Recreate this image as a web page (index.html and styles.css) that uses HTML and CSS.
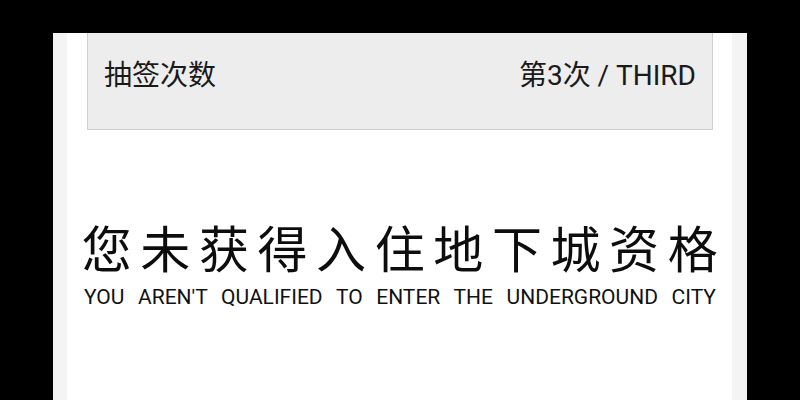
FILE: index.html
```html
<!DOCTYPE html>
<html lang="zh-CN">
<head>
<meta charset="utf-8">
<title>抽签结果</title>
<link rel="stylesheet" href="styles.css">
</head>
<body>
<div class="screen">
  <div class="panel">
    <div class="sheet">
      <div class="draw-row">
        <span class="label">抽签次数</span>
        <span class="value">第3次 / THIRD</span>
      </div>
      <div class="result">
        <div class="title">您未获得入住地下城资格</div>
        <div class="subtitle">YOU AREN'T QUALIFIED TO ENTER THE UNDERGROUND CITY</div>
      </div>
    </div>
  </div>
</div>
</body>
</html>
```

FILE: styles.css
```css
html, body {
  margin: 0;
  padding: 0;
  background: #000;
}
.screen {
  width: 800px;
  height: 400px;
  overflow: hidden;
  padding-top: 33px;
  box-sizing: border-box;
}
.panel {
  margin-left: 53px;
  width: 694px;
  height: 367px;
  box-sizing: border-box;
  background: #f4f4f4;
  padding: 0 15px 0 14px;
}
.sheet {
  background: #fff;
  height: 100%;
  padding: 0 19px 0 20px;
  box-sizing: border-box;
  font-family: Roboto, "Noto Sans CJK SC", sans-serif;
  color: #1a1a1a;
}
.draw-row {
  height: 97px;
  box-sizing: border-box;
  background: #ededed;
  border: 1px solid #cfcfcf;
  border-top: none;
  display: flex;
  justify-content: space-between;
  align-items: flex-start;
  padding: 27px 16px 0 16px;
  font-size: 28px;
  line-height: 32px;
}
.result {
  padding-top: 88px;
  display: flex;
  flex-direction: column;
  align-items: center;
}
.title {
  font-family: "Noto Sans CJK SC", sans-serif;
  font-size: 50px;
  line-height: 56px;
  letter-spacing: 8.6px;
  margin: 0 -19px 0 -11px;
  white-space: nowrap;
  color: #0d0d0d;
}
.subtitle {
  width: 632px;
  font-size: 21px;
  line-height: 26px;
  margin-top: 10px;
  white-space: nowrap;
  text-align: justify;
  text-align-last: justify;
  color: #111;
}
```
